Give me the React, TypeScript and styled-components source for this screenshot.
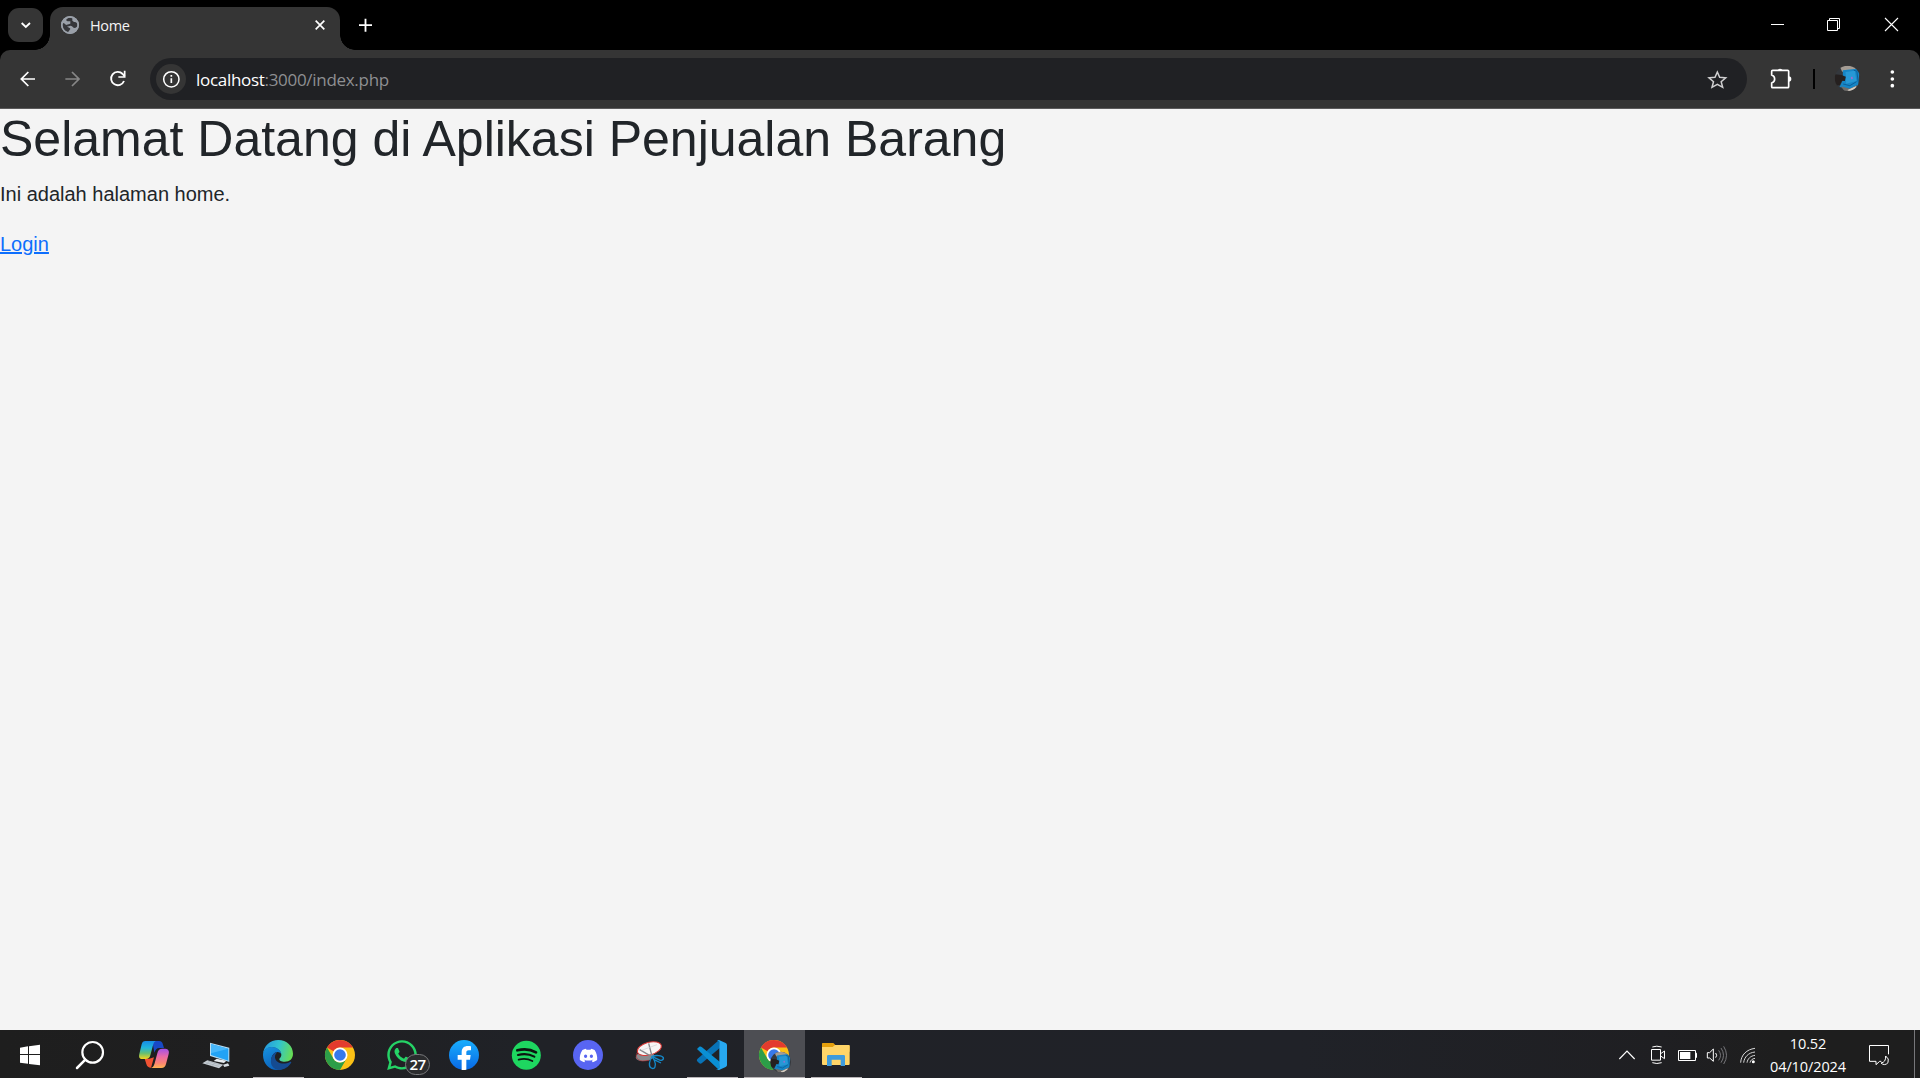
import React from 'react';
import styled, { createGlobalStyle } from 'styled-components';
import { FaDiscord, FaWhatsapp } from 'react-icons/fa';

const GlobalStyle = createGlobalStyle`
  * { box-sizing: border-box; }
  body { margin: 0; background: #f4f4f4; overflow: hidden; }
`;

const UI_FONT = '"Segoe UI", "Open Sans", "Noto Sans", sans-serif';

const Screen = styled.div`
  display: flex;
  flex-direction: column;
  width: 1920px;
  height: 1078px;
  background: #f4f4f4;
`;

const TabStrip = styled.header`
  display: flex;
  height: 50px;
  padding-left: 8px;
  background: #000;
`;

const TabSearch = styled.button`
  display: flex;
  align-items: center;
  justify-content: center;
  width: 35px;
  height: 34px;
  margin: 8px 7px 0 0;
  padding: 0;
  border: 0;
  border-radius: 11px;
  background: #353535;
`;

const Tab = styled.div`
  position: relative;
  display: flex;
  align-items: center;
  width: 290px;
  height: 43px;
  margin-top: 7px;
  padding: 0 15px 7px 11px;
  border-radius: 13px 13px 0 0;
  background: #353535;

  &::before,
  &::after {
    content: '';
    position: absolute;
    bottom: 0;
    width: 15px;
    height: 15px;
  }
  &::before {
    left: -15px;
    background: radial-gradient(circle at 0 0, transparent 14.5px, #353535 15px);
  }
  &::after {
    right: -15px;
    background: radial-gradient(circle at 100% 0, transparent 14.5px, #353535 15px);
  }
`;

const TabTitle = styled.span`
  flex: 1;
  margin-left: 11px;
  padding-top: 1px;
  color: #f4f4f4;
  font: 14.5px/20px ${UI_FONT};
  letter-spacing: -0.35px;
`;

const NewTab = styled.button`
  display: flex;
  align-items: center;
  justify-content: center;
  width: 35px;
  height: 50px;
  margin-left: 8px;
  padding: 0;
  border: 0;
  background: none;
`;

const WindowControls = styled.div`
  display: flex;
  margin-left: auto;
`;

const WindowButton = styled.button<{ $inset?: number }>`
  display: flex;
  align-items: center;
  justify-content: center;
  width: 57px;
  height: 49px;
  padding: 0 ${({ $inset = 0 }) => $inset}px 0 0;
  border: 0;
  background: none;
`;

const ToolbarBack = styled.div`
  background: #000;
`;

const Toolbar = styled.nav`
  display: flex;
  align-items: center;
  height: 59px;
  padding-left: 5px;
  border-bottom: 1px solid #5b5a5b;
  border-radius: 10px 10px 0 0;
  background: #353535;
`;

const ToolButton = styled.button<{ $width?: number; $inset?: number }>`
  display: flex;
  flex: none;
  align-items: center;
  justify-content: center;
  width: ${({ $width = 45 }) => $width}px;
  height: 42px;
  padding: 0 0 0 ${({ $inset = 0 }) => $inset}px;
  border: 0;
  background: none;
`;

const Omnibox = styled.div`
  display: flex;
  flex: none;
  align-items: center;
  width: 1597px;
  height: 42px;
  margin-left: 10px;
  padding: 0 19px 0 6px;
  border-radius: 21px;
  background: #202124;
`;

const SiteInfo = styled.span`
  display: flex;
  align-items: center;
  justify-content: center;
  width: 30px;
  height: 30px;
  border-radius: 50%;
  background: #353535;
`;

const Address = styled.span`
  flex: 1;
  margin-left: 10px;
  padding-top: 2px;
  color: #8e8f92;
  font: 17px/24px ${UI_FONT};
  letter-spacing: -0.3px;
`;

const Host = styled.span`
  color: #fff;
`;

const Divider = styled.span`
  flex: none;
  width: 2px;
  height: 20px;
  margin-right: 20px;
  background: #000;
`;

const Page = styled.main`
  flex: 1;
  color: #212529;
  font: 20px/30px Arial, "Liberation Sans", sans-serif;
`;

const Title = styled.h1`
  margin: 0 0 10px;
  font-size: 50px;
  font-weight: 500;
  line-height: 60px;
`;

const Text = styled.p`
  margin: 0 0 20px;
`;

const Link = styled.a`
  color: #0d6efd;
  text-decoration: underline;
`;

const TaskBar = styled.footer`
  display: flex;
  height: 48px;
  background: linear-gradient(90deg, #1e1e1e 0, #1f1f20 240px, #202227 520px, #202228 1300px, #1f1f22 1660px, #1e1e1e 1780px);
`;

const TaskList = styled.div`
  display: flex;
  gap: 1px;
`;

const TaskButton = styled.button<{ $running?: boolean; $active?: boolean }>`
  display: flex;
  flex-direction: column;
  align-items: center;
  justify-content: space-between;
  width: 61px;
  height: 48px;
  padding: 10px 0 0;
  border: 0;
  background: ${({ $active }) => ($active ? '#4d4e53' : 'none')};

  &::after {
    content: '';
    width: ${({ $active }) => ($active ? 61 : 51)}px;
    height: 1px;
    background: ${({ $running, $active }) => ($running || $active ? '#b9b5b8' : 'transparent')};
  }
`;

const Glyph = styled.svg`
  display: block;
  flex: none;
  overflow: visible;
`;

const IconStack = styled.span`
  position: relative;
  width: 31px;
  height: 31px;
`;

const Count = styled.span`
  position: absolute;
  left: 18px;
  top: 14px;
  width: 25px;
  height: 21px;
  border: 1px solid #77787a;
  border-radius: 11px;
  background: #2b2c2e;
  color: #fff;
  font: 600 15px/19px ${UI_FONT};
  letter-spacing: -0.6px;
  text-align: center;
`;

const WhatsappMark = styled(FaWhatsapp)`
  display: block;
  width: 34px;
  height: 34px;
  margin: -2px;
  color: #25d366;
`;

const DiscordDisc = styled.span`
  display: flex;
  align-items: center;
  justify-content: center;
  width: 30px;
  height: 30px;
  margin-left: -1px;
  border-radius: 50%;
  background: #5865f2;
`;

const DiscordMark = styled(FaDiscord)`
  width: 19px;
  height: 19px;
  color: #fff;
`;

const Tray = styled.div`
  display: flex;
  align-items: flex-start;
  margin-left: auto;
`;

const TrayIcon = styled.span<{ $width?: number }>`
  display: flex;
  justify-content: center;
  width: ${({ $width = 30 }) => $width}px;
  padding-top: 14px;
`;

const Clock = styled.time`
  display: flex;
  flex-direction: column;
  width: 88px;
  padding-top: 2px;
  color: #fff;
  font: 14.5px/23px ${UI_FONT};
  letter-spacing: -0.1px;
  text-align: center;
`;

const ShowDesktop = styled.span`
  width: 6px;
  height: 48px;
  border-left: 1px solid #77777a;
`;

type IconProps = { x: number; y?: number; size?: number; children: React.ReactNode };

/* Artwork is drawn on a grid of three units per pixel. */
const Icon = ({ x, y = 60, size = 31, children }: IconProps) => (
  <Glyph width={size} height={size} viewBox={`${x} ${y} ${size * 3} ${size * 3}`} fill="none">
    {children}
  </Glyph>
);

const ChromeArt = ({ cx }: { cx: number }) => (
  <g transform={`translate(${cx} 105)`}>
    <circle r="45" fill="#fbc116" />
    <path d="M-39-22.500A45 45 0 0 1 39-22.500H0A22.500 22.500 0 0 0-19.500-11.250Z" fill="#e33b2e" />
    <path d="M-39-22.500A45 45 0 0 0 0 45L19.500 11.250A22.500 22.500 0 0 1-19.500 11.250Z" fill="#2c9e48" />
    <circle r="22.500" fill="#fff" />
    <circle r="17.500" fill="#3779ea" />
  </g>
);

const ProfileArt = ({ id, cx, cy, r }: { id: string; cx: number; cy: number; r: number }) => (
  <g transform={`translate(${cx} ${cy}) scale(${r / 38})`}>
    <clipPath id={id}><circle r="38" /></clipPath>
    <g clipPath={`url(#${id})`}>
      <path d="M-40-40H40V40H-40Z" fill="#34383d" />
      <path d="M-24-38H25L32-28L-16-20Z" fill="#a49c93" />
      <path d="M-14-24L28-29L36-20L32 20L6 32L-24 26L-14 5Z" fill="#1685c5" />
      <path d="M-6-19L22-23L27 8L-4 16Z" fill="#2798d5" />
      <path d="M-38-12L-18-10L-5-5L-8 8L-17 7L-23 20L-38 22Z" fill="#25201f" />
      <path d="M-20 24L7 31L31 20L25 40H-8Z" fill="#6f6c69" />
      <path d="M0 35L26 23L22 36L8 41Z" fill="#d4cbc0" />
      <path d="M-13 17L7 22L27 10M19-24L28-22L32 10" stroke="#0c5f99" strokeWidth="3" />
      <path d="M10-4L15-5L16 2L11 3Z" fill="#a06bd0" />
    </g>
  </g>
);

const CopilotIcon = () => (
  <Icon x={417}>
    <defs>
      <linearGradient id="cpLeft" x1="0" y1="0" x2="0" y2="1">
        <stop offset="0" stopColor="#168be8" /><stop offset=".38" stopColor="#20b6dc" />
        <stop offset=".68" stopColor="#65be73" /><stop offset="1" stopColor="#f5d51d" />
      </linearGradient>
      <linearGradient id="cpRight" x1="0" y1="0" x2="0" y2="1">
        <stop offset="0" stopColor="#a350e8" /><stop offset=".4" stopColor="#e969a8" />
        <stop offset=".75" stopColor="#fb8473" /><stop offset="1" stopColor="#ffb451" />
      </linearGradient>
    </defs>
    <path d="M457 63H477C485 63 487 67 489 74L492 84H478C470 84 466 90 463 98Z" fill="#1849c6" />
    <path d="M434 116H448L462 112L453 143C446 143 441 140 439 132Z" fill="#f05232" />
    <path d="M436 63H467C460 67 459 76 456 87L451 106C449 114 445 117 437 117H427C418 117 416 111 418 102L425 73C427 66 430 63 436 63Z" fill="url(#cpLeft)" />
    <path d="M487 86H496C506 87 508 94 506 102L498 132C496 140 492 144 484 144H453C462 141 463 132 466 122L472 100C474 90 479 86 487 86Z" fill="url(#cpRight)" />
  </Icon>
);

const ComputerIcon = () => (
  <Icon x={603}>
    <path d="M630 68L688 83V126L630 108Z" fill="#b9dcf0" />
    <path d="M633 72L685 86V122L633 105Z" fill="#22a3f5" />
    <path d="M633 72L685 86L633 100Z" fill="#48b7fa" />
    <path d="M650 116L679 122L672 129L641 123Z" fill="#e8edf0" />
    <path d="M622 121L670 134L657 145L607 130Z" fill="#c6cdd3" />
    <path d="M617 128L657 139M625 124L663 135M630 123L618 133M646 128L634 138" stroke="#929da4" strokeWidth="1.200" />
    <path d="M669 134L684 130L688 137L673 141Z" fill="#d7dde2" />
  </Icon>
);

const EdgeIcon = () => (
  <Icon x={69}>
    <defs>
      <linearGradient id="edTop" x1="0" y1=".3" x2="1" y2=".5">
        <stop offset="0" stopColor="#2497e0" /><stop offset=".5" stopColor="#31c4cf" /><stop offset="1" stopColor="#67dd54" />
      </linearGradient>
      <linearGradient id="edLeft" x1="0" y1="0" x2=".4" y2="1">
        <stop offset="0" stopColor="#1792df" /><stop offset="1" stopColor="#0c64bd" />
      </linearGradient>
    </defs>
    <path d="M69 103C71 77 90 60 115 60C140 60 159 78 159 101C159 116 149 125 134 125C124 125 117 121 118 116C121 113 124 109 124 104C123 92 111 82 95 82C81 82 72 91 69 103Z" fill="url(#edTop)" />
    <path d="M69 105C69 91 80 81 95 81C111 81 123 92 124 102C120 96 112 94 105 98C94 105 91 120 98 132C104 142 115 148 127 147C97 159 69 136 69 105Z" fill="url(#edLeft)" />
    <path d="M105 98C88 111 86 146 118 150C134 149 145 141 153 129C155 126 153 124 150 126C130 136 108 129 105 113C104 106 108 101 112 97C110 96 107 97 105 98Z" fill="#154b91" />
  </Icon>
);

const SnipIcon = () => (
  <Icon x={465}>
    <ellipse cx="495" cy="109" rx="28" ry="14" transform="rotate(-7 495 109)" fill="#898a8e" />
    <path d="M471 98C466 110 470 121 488 123L507 121" stroke="#b33134" strokeWidth="2" />
    <ellipse cx="508" cy="86" rx="37" ry="19" transform="rotate(-15 508 86)" fill="#f7f5f5" stroke="#d93634" strokeWidth="3" />
    <path d="M479 89L520 113M506 70L517 113" stroke="#86868b" strokeWidth="4" />
    <path d="M485 91L531 74" stroke="#cfcfd2" strokeWidth="2" />
    <path d="M517 110C526 104 546 106 550 113C552 121 542 123 536 119Z" stroke="#1489ca" strokeWidth="4" />
    <path d="M517 110C507 121 505 140 514 144C524 150 530 137 523 121ZM522 119L543 129" stroke="#1489ca" strokeWidth="4" />
  </Icon>
);

const CodeIcon = () => (
  <Icon x={51}>
    <path d="M117 60L120 83L66 129C62 132 60 131 57 129L51 123C50 120 51 118 53 116Z" fill="#0873b7" />
    <path d="M51 87L57 81C60 79 63 79 66 82L120 126L117 150Z" fill="#0a8fd4" />
    <path d="M117 60L137 69C140 71 141 73 141 76V134C141 137 140 139 137 141L117 150C113 151 111 149 109 147C115 150 118 147 118 142V68C118 63 115 60 109 63C111 61 114 59 117 60Z" fill="#27a8f0" />
  </Icon>
);

export default function App() {
  return (
    <Screen>
      <GlobalStyle />
      <TabStrip>
        <TabSearch aria-label="Search tabs">
          <Icon x={53} y={51} size={16}>
            <path d="M64 69L76.500 81L89 69" stroke="#fff" strokeWidth="5.500" />
          </Icon>
        </TabSearch>
        <Tab>
          <Icon x={183} y={48} size={18}>
            <circle cx="210" cy="75" r="27" fill="#9aa0a9" />
            <path d="M209 53C198 55 196 61 203 64L211 64V71L198 75C193 70 190 68 187 70C185 86 192 94 204 97L211 87C211 83 205 82 201 80L211 77C216 77 218 80 222 84C230 83 232 80 233 74C231 67 228 65 222 66L217 62V55Z" fill="#35363a" />
            <circle cx="210" cy="75" r="24.500" stroke="#9aa0a9" strokeWidth="5" />
          </Icon>
          <TabTitle>Home</TabTitle>
          <Icon x={945} y={60} size={10}>
            <path d="M947 62L973 88M973 62L947 88" stroke="#fff" strokeWidth="5" />
          </Icon>
        </Tab>
        <NewTab aria-label="New tab">
          <Icon x={1077} y={57} size={13}>
            <path d="M1096.500 56V95M1077 75.500H1116" stroke="#fff" strokeWidth="5.500" />
          </Icon>
        </NewTab>
        <WindowControls>
          <WindowButton aria-label="Minimize">
            <Glyph width="13" height="13"><path d="M0 6.500H13" stroke="#fff" /></Glyph>
          </WindowButton>
          <WindowButton $inset={2} aria-label="Restore">
            <Glyph width="13" height="13" fill="none" stroke="#fff"><path d="M.5 2.500H10.500V12.500H.5ZM2.500 2.500V.5H12.500V10.500H10.500" /></Glyph>
          </WindowButton>
          <WindowButton aria-label="Close">
            <Glyph width="13" height="13"><path d="M0 0L13 13M13 0L0 13" stroke="#fff" strokeWidth="1.100" /></Glyph>
          </WindowButton>
        </WindowControls>
      </TabStrip>
      <ToolbarBack>
        <Toolbar>
          <ToolButton aria-label="Back">
            <Icon x={60} y={213} size={16}>
              <path d="M105 237H66M85 216L64 237L85 258" stroke="#fff" strokeWidth="5.200" />
            </Icon>
          </ToolButton>
          <ToolButton aria-label="Forward">
            <Icon x={194} y={213} size={16}>
              <path d="M195 237H234M215 216L236 237L215 258" stroke="#878787" strokeWidth="5.200" />
            </Icon>
          </ToolButton>
          <ToolButton aria-label="Reload">
            <Icon x={329} y={213} size={16}>
              <path d="M371 243A20 20 0 1 1 367 222L373 229" stroke="#fff" strokeWidth="5.500" />
              <path d="M373 212V231H354" stroke="#fff" strokeWidth="5.200" />
            </Icon>
          </ToolButton>
          <Omnibox>
            <SiteInfo>
              <Icon x={489} y={213} size={17}>
                <circle cx="514" cy="238" r="23" stroke="#fff" strokeWidth="4.600" />
                <path d="M514 235V249M514 225V230" stroke="#fff" strokeWidth="5" />
              </Icon>
            </SiteInfo>
            <Address><Host>localhost</Host>:3000/index.php</Address>
            <Icon x={84} y={207} size={20}>
              <path d="M112 216L119 232L137 233.500L123.500 245L128 262L112 253L96 262L100.500 245L87 233.500L105 232Z" stroke="#d0d0d1" strokeWidth="4.500" />
            </Icon>
          </Omnibox>
          <ToolButton $width={66} $inset={4} aria-label="Extensions">
            <Icon x={273} y={204} size={22}>
              <path d="M278 211H323Q326 211 326 214V260Q326 263 323 263H278Q275 263 275 260V249Q284 246 284 237T275 225V214Q275 211 278 211Z" stroke="#fff" strokeWidth="5" />
              <path d="M293 211A8 7 0 0 1 308 211ZM326 229A8 8 0 0 1 326 245Z" fill="#fff" />
            </Icon>
          </ToolButton>
          <Divider />
          <ToolButton $width={26} aria-label="Profile">
            <Icon x={465} y={198} size={26}>
              <ProfileArt id="profile" cx={502.5} cy={235} r={38} />
            </Icon>
          </ToolButton>
          <ToolButton $width={59} $inset={5} aria-label="Menu">
            <Icon x={609} y={207} size={20}>
              <circle cx="637" cy="216" r="5.500" fill="#fff" />
              <circle cx="637" cy="237" r="5.500" fill="#fff" />
              <circle cx="637" cy="257" r="5.500" fill="#fff" />
            </Icon>
          </ToolButton>
        </Toolbar>
      </ToolbarBack>
      <Page>
        <Title>Selamat Datang di Aplikasi Penjualan Barang</Title>
        <Text>Ini adalah halaman home.</Text>
        <Link>Login</Link>
      </Page>
      <TaskBar>
        <TaskList>
          <TaskButton aria-label="Start">
            <Icon x={45}><path d="M60 83L84 79V102H60ZM87 78.500L120 74V102H87ZM60 105H84V131L60 128ZM87 105H120V136L87 132Z" fill="#fff" /></Icon>
          </TaskButton>
          <TaskButton aria-label="Search">
            <Icon x={231}>
              <circle cx="278" cy="97" r="31" stroke="#fff" strokeWidth="6.500" />
              <path d="M256 119L231 144" stroke="#fff" strokeWidth="7.500" strokeLinecap="round" />
            </Icon>
          </TaskButton>
          <TaskButton aria-label="Copilot"><CopilotIcon /></TaskButton>
          <TaskButton aria-label="This PC"><ComputerIcon /></TaskButton>
          <TaskButton $running aria-label="Edge"><EdgeIcon /></TaskButton>
          <TaskButton aria-label="Chrome"><Icon x={255}><ChromeArt cx={300} /></Icon></TaskButton>
          <TaskButton aria-label="WhatsApp">
            <IconStack><WhatsappMark /><Count>27</Count></IconStack>
          </TaskButton>
          <TaskButton aria-label="Facebook">
            <Icon x={627}>
              <defs>
                <linearGradient id="fb" x1="0" y1="0" x2="0" y2="1"><stop offset="0" stopColor="#19aefd" /><stop offset="1" stopColor="#0868e5" /></linearGradient>
              </defs>
              <circle cx="672" cy="105" r="45" fill="url(#fb)" />
              <path d="M665 150V119H653V105H665V97C665 84 672 78 684 78C687 78 691 78.500 693 79V91H686C680 91 679 94 679 98V105H692L690 119H679V149Q672 151 665 150Z" fill="#fff" />
            </Icon>
          </TaskButton>
          <TaskButton aria-label="Spotify">
            <Icon x={93}>
              <circle cx="139" cy="105.500" r="43.500" fill="#1ed760" />
              <g stroke="#0c1510" strokeLinecap="round">
                <path d="M112 91Q143 83 168 97" strokeWidth="8" />
                <path d="M114 105Q141 98 163 110" strokeWidth="6.500" />
                <path d="M116 119Q138 113 157 123" strokeWidth="5.500" />
              </g>
            </Icon>
          </TaskButton>
          <TaskButton aria-label="Discord"><DiscordDisc><DiscordMark /></DiscordDisc></TaskButton>
          <TaskButton aria-label="Snipping Tool"><SnipIcon /></TaskButton>
          <TaskButton $running aria-label="Visual Studio Code"><CodeIcon /></TaskButton>
          <TaskButton $active aria-label="Chrome, personal profile">
            <Icon x={237}>
              <ChromeArt cx={282} />
              <ProfileArt id="taskProfile" cx={302} cy={126} r={31} />
            </Icon>
          </TaskButton>
          <TaskButton $running aria-label="File Explorer">
            <Icon x={423}>
              <path d="M426 71Q426 69 428 69H460L466 75H506Q509 75 509 78V95H426Z" fill="#e5a00c" />
              <path d="M426 81H458L465 75H506Q509 75 509 78V132Q509 135 506 135H429Q426 135 426 132Z" fill="#ffd568" />
              <path d="M441 138V109Q441 105 445 105H491Q495 105 495 109V138H482V119H455V138Z" fill="#3e9bdc" />
            </Icon>
          </TaskButton>
        </TaskList>
        <Tray>
          <TrayIcon>
            <Icon x={57} y={72} size={20}><path d="M58 117L81 93L104 117" stroke="#fff" strokeWidth="3.500" /></Icon>
          </TrayIcon>
          <TrayIcon>
            <Icon x={147} y={72} size={20}>
              <path d="M154.500 88.500H181.500V120.500H154.500ZM182 101L193.500 93V116L182 108M157 81Q170 76 185 81M157 128Q170 133 185 128" stroke="#fff" strokeWidth="3" />
            </Icon>
          </TrayIcon>
          <TrayIcon>
            <Icon x={237} y={72} size={20}>
              <path d="M235.500 91.500H286.500V121.500H235.500ZM287 99.500H289.500V112.500H287" stroke="#fff" strokeWidth="3" />
              <path d="M240 96H271V117H240Z" fill="#fff" />
            </Icon>
          </TrayIcon>
          <TrayIcon>
            <Icon x={327} y={72} size={20}>
              <path d="M322 98H329L340 87V124L329 114H322ZM347 99Q353 106 347 113" stroke="#fff" strokeWidth="3" />
              <path d="M356 91Q367 106 356 121M363 84Q378 106 363 128M371 79Q388 106 371 132" stroke="#77777b" strokeWidth="3" />
            </Icon>
          </TrayIcon>
          <TrayIcon>
            <Icon x={417} y={72} size={20}>
              <path d="M422 128C423 105 440 88 465 85M431 128C433 111 445 98 465 96M441 128C443 116 451 108 465 106M450 128C451 121 457 116 465 115" stroke="#d7d7d8" strokeWidth="3" />
              <circle cx="460" cy="125" r="4.500" fill="#fff" />
            </Icon>
          </TrayIcon>
          <Clock><span>10.52</span><span>04/10/2024</span></Clock>
          <TrayIcon $width={62}>
            <Icon x={816} y={72} size={22}>
              <path d="M844 124H839L828 134V124H808.500V76.500H865.500V103" stroke="#fff" strokeWidth="3" />
              <path d="M857 108Q869 116 864 128Q854 139 843 129Q858 127 857 108Z" stroke="#fff" strokeWidth="3" />
            </Icon>
          </TrayIcon>
          <ShowDesktop />
        </Tray>
      </TaskBar>
    </Screen>
  );
}
